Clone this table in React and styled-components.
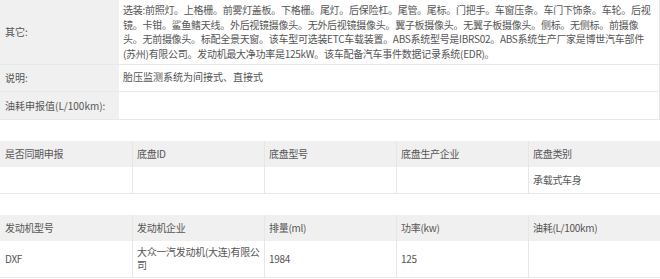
import React from "react";
import styled, { createGlobalStyle } from "styled-components";

const GlobalStyle = createGlobalStyle`
  body {
    margin: 0;
    background: #fff;
    font-family: "Noto Sans CJK SC", "Noto Sans", sans-serif;
    color: #555;
  }
`;

const otherLines = [
  "选装:前照灯。上格栅。前雾灯盖板。下格栅。尾灯。后保险杠。尾管。尾标。门把手。车窗压条。车门下饰条。车轮。后视",
  "镜。卡钳。鲨鱼鳍天线。外后视镜摄像头。无外后视镜摄像头。翼子板摄像头。无翼子板摄像头。侧标。无侧标。前摄像",
  "头。无前摄像头。标配全景天窗。该车型可选装ETC车载装置。ABS系统型号是IBRS02。ABS系统生产厂家是博世汽车部件",
  "(苏州)有限公司。发动机最大净功率是125kW。该车配备汽车事件数据记录系统(EDR)。",
];

const chassis = {
  head: ["是否同期申报", "底盘ID", "底盘型号", "底盘生产企业", "底盘类别"],
  row: ["", "", "", "", "承载式车身"],
};

const engine = {
  head: ["发动机型号", "发动机企业", "排量(ml)", "功率(kw)", "油耗(L/100km)"],
  row: ["DXF", "大众一汽发动机(大连)有限公司", "1984", "125", ""],
};

const App = () => {
  return (
    <>
      <GlobalStyle />
      <Page>
        <InfoTable>
          <InfoRow>
            <Label>其它:</Label>
            <Value $multi>
              {otherLines.map((line, i) => (
                <Line key={i}>{line}</Line>
              ))}
            </Value>
          </InfoRow>
          <InfoRow $h={26}>
            <Label>说明:</Label>
            <Value>胎压监测系统为间接式、直接式</Value>
          </InfoRow>
          <InfoRow $h={27} $last>
            <Label>油耗申报值(L/100km):</Label>
            <Value />
          </InfoRow>
        </InfoTable>

        <GridTable data={chassis} />
        <GridTable data={engine} tall />
      </Page>
    </>
  );
};

const GridTable = ({ data, tall }) => {
  return (
    <Table>
      <HeadRow>
        {data.head.map((h, i) => (
          <Cell key={i} $first={i === 0}>
            {h}
          </Cell>
        ))}
      </HeadRow>
      <BodyRow $tall={tall}>
        {data.row.map((c, i) => (
          <Cell key={i} $first={i === 0}>
            {c}
          </Cell>
        ))}
      </BodyRow>
    </Table>
  );
};

const Page = styled.div`
  width: 660px;
  font-size: 10px;
`;

const InfoTable = styled.div`
  width: 659px;
  border-right: 1px solid #e6e6e6;
`;

const InfoRow = styled.div`
  display: grid;
  grid-template-columns: 119px 1fr;
  min-height: ${(p) => (p.$h ? `${p.$h}px` : "auto")};
  border-bottom: 1px solid #e8e8e8;
`;

const Label = styled.div`
  background: #f0f0f0;
  display: flex;
  align-items: center;
  padding-left: 5px;
  color: #555;
`;

const Value = styled.div`
  display: flex;
  flex-direction: ${(p) => (p.$multi ? "column" : "row")};
  align-items: ${(p) => (p.$multi ? "flex-start" : "center")};
  padding: ${(p) => (p.$multi ? "3px 4px 2px" : "0 4px")};
  line-height: 14.7px;
`;

const Line = styled.div`
  white-space: nowrap;
  letter-spacing: -0.28px;
`;

const Table = styled.div`
  margin-top: 21px;
  width: 660px;
  border-bottom: 1px solid #e8e8e8;
`;

const HeadRow = styled.div`
  display: grid;
  grid-template-columns: repeat(5, 132px);
  height: 26px;
  background: #f0f0f0;
`;

const BodyRow = styled.div`
  display: grid;
  grid-template-columns: repeat(5, 132px);
  min-height: ${(p) => (p.$tall ? "36px" : "26px")};
`;

const Cell = styled.div`
  display: flex;
  align-items: center;
  padding: 0 1px 0 5px;
  line-height: 12.5px;
  letter-spacing: -0.3px;
  border-left: ${(p) => (p.$first ? "none" : "1px solid #e6e6e6")};
  padding-left: ${(p) => (p.$first ? "5px" : "4px")};
`;

export default App;
